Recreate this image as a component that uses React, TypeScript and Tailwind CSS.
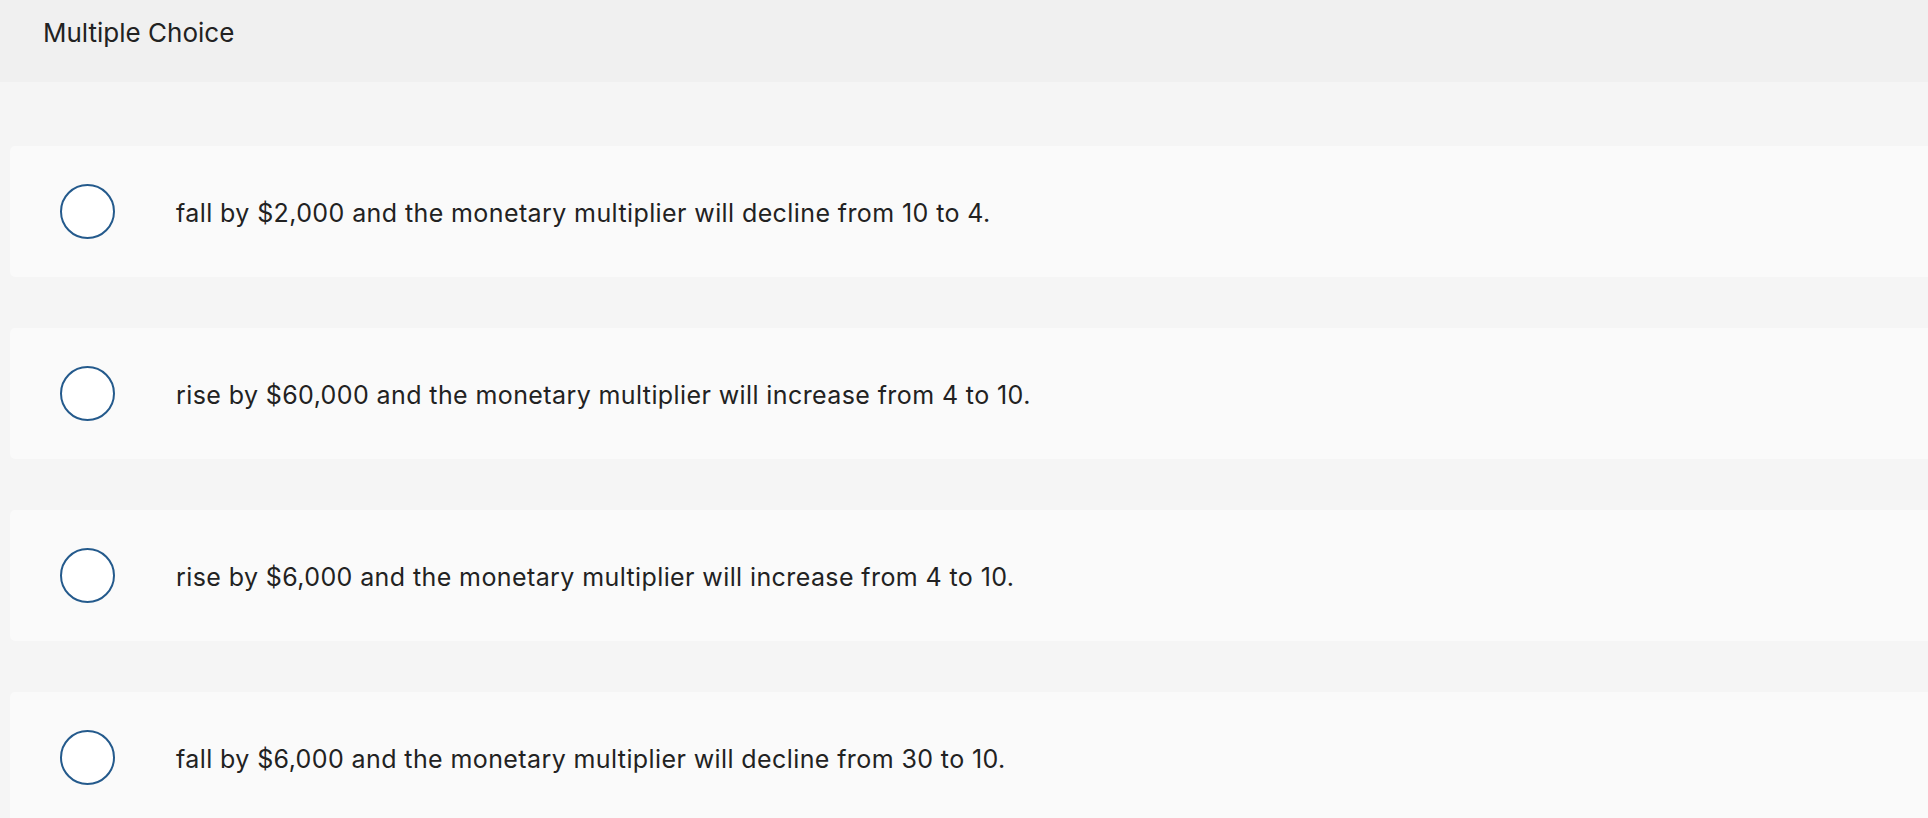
const options = [
  'fall by $2,000 and the monetary multiplier will decline from 10 to 4.',
  'rise by $60,000 and the monetary multiplier will increase from 4 to 10.',
  'rise by $6,000 and the monetary multiplier will increase from 4 to 10.',
  'fall by $6,000 and the monetary multiplier will decline from 30 to 10.',
];

function App() {
  return (
    <div
      className="h-[818px] overflow-hidden bg-[#f5f5f5] text-[#222222]"
      style={{ fontFamily: 'Inter, "Liberation Sans", sans-serif' }}
    >
      <div className="h-[82px] bg-[#f0f0f0] pl-[43px] pt-[17px]">
        <h2 className="text-[26px] leading-[32px]">Multiple Choice</h2>
      </div>

      <div className="flex flex-col gap-[51px] pl-[10px] pt-[64px]">
        {options.map((text, i) => (
          <label
            key={i}
            className="flex h-[131px] shrink-0 items-center rounded-l-[5px] bg-[#fafafa] pl-[50px]"
          >
            <span className="h-[55px] w-[55px] shrink-0 rounded-full border-2 border-[#245a8c] bg-white" />
            <span className="ml-[61px] pt-[2px] text-[25px] leading-[30px] tracking-[0.4px]">{text}</span>
          </label>
        ))}
      </div>
    </div>
  );
}

export default App;
